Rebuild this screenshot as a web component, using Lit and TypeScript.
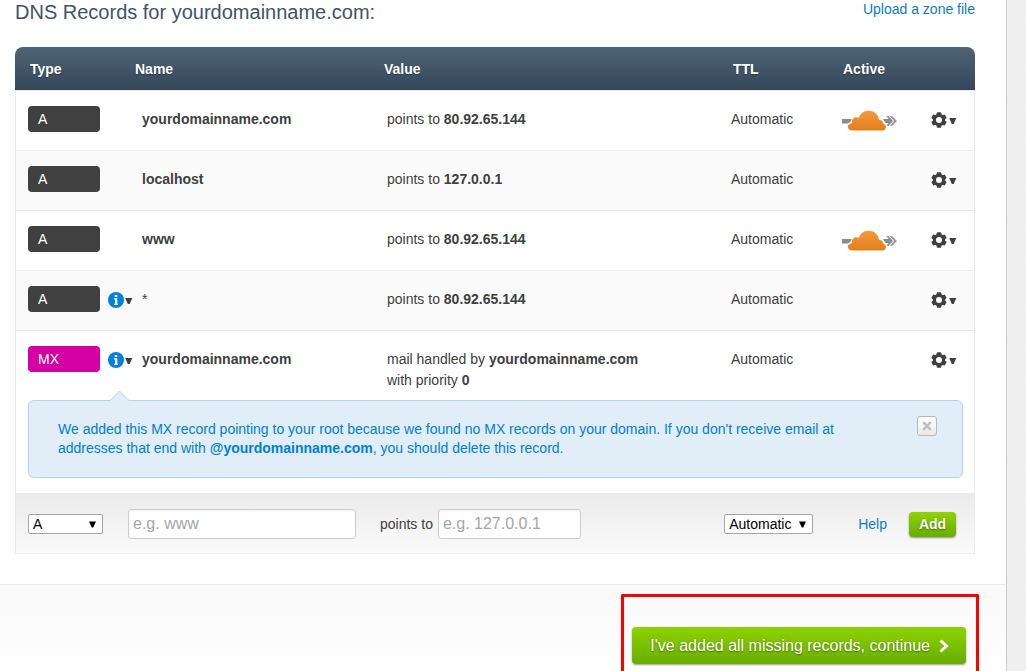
import { LitElement, html, css, nothing } from "lit";
import { customElement, property, state } from "lit/decorators.js";

interface DnsRecord {
  type: "A" | "MX";
  name: string;
  value: string;
  priority?: number;
  ttl: string;
  proxied?: boolean;
  info?: boolean;
  notice?: boolean;
}

const RECORDS: DnsRecord[] = [
  { type: "A", name: "yourdomainname.com", value: "80.92.65.144", ttl: "Automatic", proxied: true },
  { type: "A", name: "localhost", value: "127.0.0.1", ttl: "Automatic" },
  { type: "A", name: "www", value: "80.92.65.144", ttl: "Automatic", proxied: true },
  { type: "A", name: "*", value: "80.92.65.144", ttl: "Automatic", info: true },
  { type: "MX", name: "yourdomainname.com", value: "yourdomainname.com", priority: 0, ttl: "Automatic", info: true, notice: true },
];

const caret = html`<svg width="8" height="8" viewBox="0 0 8 8" aria-hidden="true">
  <path d="M0.200 2H7.300L4.700 8H2.800Z" fill="#404040" />
</svg>`;

@customElement("cloud-icon")
export class CloudIcon extends LitElement {
  static styles = css`
    :host { display: block; }
    svg { display: block; }
  `;
  render() {
    return html`<svg width="56" height="22" viewBox="0 0 56 22" aria-hidden="true">
      <defs>
        <linearGradient id="sky" x1="0" y1="0" x2="0" y2="1">
          <stop offset="0" stop-color="#f6993a" />
          <stop offset="1" stop-color="#e17f1c" />
        </linearGradient>
      </defs>
      <path d="M0 9H10L7 13.500H0Z" fill="#8d8d8d" />
      <path d="M41 9H46.500L44.500 6H46.500L51 11L46.500 16H44.500L46.500 13H43.500Z" fill="#8d8d8d" />
      <path d="M47.800 6H50L55 11L50 16H47.800L52 11Z" fill="#9a9a9a" />
      <path
        d="M10.500 20.500C4.500 20.500 4.500 13.500 10 13.300C9.300 8 13.500 6.300 17 7.800C18.500 2.500 23 .8 27 .8C32.500 .8 36.500 4.800 37 10C39.500 9.500 41 11 41 13.500C45 14 45 20.500 40.500 20.500Z"
        fill="url(#sky)" stroke="#fff" stroke-width="2" paint-order="stroke" />
    </svg>`;
  }
}

@customElement("gear-icon")
export class GearIcon extends LitElement {
  static styles = css`
    :host { display: block; }
    svg { display: block; }
  `;
  render() {
    return html`<svg width="16" height="16" viewBox="-8 -8 16 16" aria-hidden="true">
      <g fill="#404040">
        ${[0, 60, 120].map((a) => html`<svg x="-8" y="-8" width="16" height="16" viewBox="-8 -8 16 16">
          <rect x="-2.300" y="-7.700" width="4.600" height="15.400" rx="1" transform="rotate(${a})" />
        </svg>`)}
        <circle r="6.200" />
      </g>
      <circle r="3" fill="#fff" />
    </svg>`;
  }
}

@customElement("record-row-menu")
export class RecordRowMenu extends LitElement {
  @property() kind: "gear" | "info" = "gear";
  static styles = css`
    :host { display: block; }
    button {
      display: flex;
      align-items: center;
      gap: 1px;
      padding: 0;
      border: 0;
      background: none;
      cursor: pointer;
    }
    .gear { gap: 2px; }
    svg { display: block; }
  `;
  render() {
    return this.kind === "gear"
      ? html`<button class="gear" type="button" aria-label="Record settings"><gear-icon></gear-icon>${caret}</button>`
      : html`<button type="button" aria-label="Record information">
          <svg width="16" height="16" viewBox="0 0 16 16" aria-hidden="true">
            <circle cx="8" cy="8" r="8" fill="#0080e0" />
            <path d="M6.700 3H9.300V5H6.700ZM6 6.300H9.300V11.700H10V13H6V11.700H7V7.600H6Z" fill="#fff" />
          </svg>${caret}
        </button>`;
  }
}

@customElement("app-root")
export class AppRoot extends LitElement {
  @state() private noticeOpen = true;

  static styles = css`
    :host {
      display: flex;
      box-sizing: border-box;
      min-height: 100vh;
      padding-right: 19px;
      background: #f1f1f1 url("data:image/svg+xml,%3Csvg xmlns='http://www.w3.org/2000/svg' width='120' height='120'%3E%3Cfilter id='n'%3E%3CfeTurbulence type='fractalNoise' baseFrequency='0.6' numOctaves='2' stitchTiles='stitch'/%3E%3CfeColorMatrix type='saturate' values='0'/%3E%3C/filter%3E%3Crect width='120' height='120' filter='url(%23n)' opacity='0.05'/%3E%3C/svg%3E");
      color: #404040;
      font: 14px/21px "Liberation Sans", Arial, sans-serif;
    }
    * { box-sizing: border-box; }
    a { color: #0e7bd4; text-decoration: none; }
    .sheet {
      flex: 1;
      display: flex;
      flex-direction: column;
      min-width: 0;
      background: #fff;
      border-right: 1px solid #ccc;
    }
    .content { padding: 0 31px 30px 15px; }
    .heading {
      display: flex;
      justify-content: space-between;
      margin-bottom: 23px;
    }
    h1 {
      margin: 0;
      font-size: 20px;
      line-height: 24px;
      font-weight: 400;
      color: #405468;
    }
    .heading a { line-height: 18px; }
    table {
      width: 100%;
      table-layout: fixed;
      border-collapse: separate;
      border-spacing: 0;
    }
    .c-type { width: 119px; }
    .c-name { width: 249px; }
    .c-ttl { width: 111px; }
    .c-active { width: 88px; }
    .c-menu { width: 49px; }
    thead tr { background: linear-gradient(#4e6575, #34465a); }
    thead { color: #fff; }
    th {
      height: 43px;
      padding: 2px 0 0;
      text-align: left;
      line-height: 21px;
      text-shadow: 0 1px 1px rgba(0, 0, 0, 0.3);
    }
    thead tr, th:first-child { border-top-left-radius: 8px; }
    thead tr, th:last-child { border-top-right-radius: 8px; }
    th.type { padding-left: 15px; }
    th.name, th.value { padding-left: 1px; }
    th.ttl { padding-left: 6px; }
    th.active { padding-left: 5px; }
    td {
      height: 60px;
      padding: 18px 0 0 4px;
      border-top: 1px solid #ebebeb;
      vertical-align: top;
    }
    td:first-child { border-left: 1px solid #ebebeb; }
    td:last-child { border-right: 1px solid #ebebeb; }
    tbody tr.alt { background: #fafafa; }
    td.type { padding: 15px 0 0 12px; }
    td.name { padding-left: 8px; }
    td.cloud { padding-top: 19px; }
    td.menu { padding-top: 21px; padding-left: 5px; }
    td.notice-cell {
      height: auto;
      border-top: 0;
      padding: 9px 11px 15px 12px;
    }
    .type-line { display: flex; align-items: center; gap: 8px; }
    .type-line record-row-menu { padding-top: 2px; }
    .badge {
      width: 72px;
      padding-left: 10px;
      border-radius: 4px;
      line-height: 26px;
      color: #fff;
      background: #404040;
    }
    .badge.mx { background: #d400a2; }
    .notice {
      position: relative;
      display: flex;
      align-items: flex-start;
      gap: 60px;
      padding: 15px 25px 19px 29px;
      border: 1px solid #b1d5ee;
      border-radius: 6px;
      background: #e1edf7;
      color: #0080d8;
    }
    .notice p { flex: 1; margin: 0; padding-top: 4px; line-height: 19px; }
    .notch { position: absolute; left: 80px; top: -11px; }
    .close {
      width: 20px;
      height: 20px;
      padding: 0;
      display: grid;
      place-items: center;
      border: 1px solid #b9b9b9;
      border-radius: 3px;
      background: linear-gradient(#fff, #e9e9e9);
    }
    form {
      display: flex;
      align-items: center;
      height: 61px;
      padding: 2px 18px 0 12px;
      border: 1px solid #ebebeb;
      border-top: 0;
      background: linear-gradient(#ebebeb, #fafafa);
    }
    select {
      appearance: none;
      height: 20px;
      padding: 0 4px;
      border: 1px solid #a6a6a6;
      border-radius: 2px;
      color: #000;
      font: inherit;
      line-height: 18px;
      background: #fff url("data:image/svg+xml,%3Csvg xmlns='http://www.w3.org/2000/svg' width='7' height='7'%3E%3Cpath d='M0 0.500H7L4.200 6.500H2.800Z'/%3E%3C/svg%3E") no-repeat right 6px center;
    }
    .pick-type { width: 75px; margin-right: 25px; }
    .pick-ttl { width: 89px; margin-left: auto; }
    input {
      height: 30px;
      padding: 0 4px;
      border: 1px solid #ccc;
      border-radius: 3px;
      background: #fff;
      box-shadow: inset 0 1px 2px rgba(0, 0, 0, 0.06);
      color: #404040;
      font: 16px/20px "Liberation Sans", Arial, sans-serif;
    }
    input::placeholder { color: #a6a6a6; }
    .in-name { width: 228px; margin-right: 24px; }
    .in-value { width: 143px; margin-left: 5px; }
    .help { margin: 0 22px 0 45px; }
    .green {
      border: 0;
      border-radius: 4px;
      background: linear-gradient(#8ed300, #68ad00);
      box-shadow: 0 1px 2px rgba(0, 0, 0, 0.4);
      color: #fff;
      text-shadow: 0 1px 2px rgba(0, 0, 0, 0.4);
      font-family: inherit;
      cursor: pointer;
    }
    .add { height: 25px; width: 47px; padding: 0; font-size: 14px; font-weight: 700; }
    footer {
      flex: 1;
      display: flex;
      justify-content: flex-end;
      padding: 9px 27px 0;
      border-top: 1px solid #ebebeb;
      background: linear-gradient(#fafafa 40%, #fff);
    }
    .highlight {
      padding: 30px 10px 7px 8px;
      border: 3px solid #f00;
      border-bottom: 0;
      border-radius: 2px 2px 0 0;
    }
    .continue {
      display: flex;
      align-items: center;
      gap: 9px;
      height: 37px;
      padding: 0 17px 0 18px;
      font-size: 16px;
    }
  `;

  private renderRecord(r: DnsRecord, i: number) {
    const open = r.notice && this.noticeOpen;
    return html`
      <tr class="${i % 2 ? "alt" : ""}">
        <td class="type">
          <div class="type-line">
            <span class="badge ${r.type.toLowerCase()}">${r.type}</span>
            ${r.info ? html`<record-row-menu kind="info"></record-row-menu>` : nothing}
          </div>
        </td>
        <td class="name">${r.name === "*" ? r.name : html`<strong>${r.name}</strong>`}</td>
        <td>
          ${r.type === "MX"
            ? html`mail handled by <strong>${r.value}</strong><br />with priority <strong>${r.priority}</strong>`
            : html`points to <strong>${r.value}</strong>`}
        </td>
        <td>${r.ttl}</td>
        <td class="cloud">${r.proxied ? html`<cloud-icon></cloud-icon>` : nothing}</td>
        <td class="menu"><record-row-menu></record-row-menu></td>
      </tr>
      ${open
        ? html`<tr>
            <td class="notice-cell" colspan="6">
              <div class="notice">
                <svg class="notch" width="22" height="12" viewBox="0 0 22 12" aria-hidden="true">
                  <path d="M1 12V11L10.500 1L20 11V12Z" fill="#e1edf7" />
                  <path d="M1 10.500L10.500 1L20 10.500" fill="none" stroke="#b1d5ee" />
                </svg>
                <p>
                  We added this MX record pointing to your root because we found no MX records on your domain. If you
                  don't receive email at addresses that end with <strong>@yourdomainname.com</strong>, you should delete
                  this record.
                </p>
                <button class="close" type="button" aria-label="Close" @click=${() => (this.noticeOpen = false)}>
                  <svg width="10" height="10" viewBox="0 0 10 10" aria-hidden="true">
                    <path d="M1.200 1.200L8.800 8.800M8.800 1.200L1.200 8.800" stroke="#bdbdbd" stroke-width="2.400" />
                  </svg>
                </button>
              </div>
            </td>
          </tr>`
        : nothing}
    `;
  }

  render() {
    return html`
      <main class="sheet">
        <section class="content">
          <div class="heading">
            <h1>DNS Records for yourdomainname.com:</h1>
            <a href="#upload">Upload a zone file</a>
          </div>
          <table>
            <colgroup>
              <col class="c-type" /><col class="c-name" /><col /><col class="c-ttl" /><col class="c-active" /><col class="c-menu" />
            </colgroup>
            <thead>
              <tr>
                <th class="type">Type</th>
                <th class="name">Name</th>
                <th class="value">Value</th>
                <th class="ttl">TTL</th>
                <th class="active">Active</th>
                <th></th>
              </tr>
            </thead>
            <tbody>
              ${RECORDS.map((r, i) => this.renderRecord(r, i))}
            </tbody>
          </table>
          <form @submit=${(e: Event) => e.preventDefault()}>
            <select class="pick-type" aria-label="Record type">
              <option>A</option>
              <option>MX</option>
            </select>
            <input class="in-name" type="text" aria-label="Name" placeholder="e.g. www" />
            <label for="target">points to</label>
            <input class="in-value" id="target" type="text" placeholder="e.g. 127.0.0.1" />
            <select class="pick-ttl" aria-label="TTL">
              <option>Automatic</option>
            </select>
            <a class="help" href="#help">Help</a>
            <button class="green add" type="submit">Add</button>
          </form>
        </section>
        <footer>
          <div class="highlight">
            <button class="green continue" type="button">
              I've added all missing records, continue
              <svg width="10" height="14" viewBox="0 0 10 14" aria-hidden="true">
                <path d="M1.500 1.500L7.500 7L1.500 12.500" fill="none" stroke="#fff" stroke-width="3" />
              </svg>
            </button>
          </div>
        </footer>
      </main>
    `;
  }
}
